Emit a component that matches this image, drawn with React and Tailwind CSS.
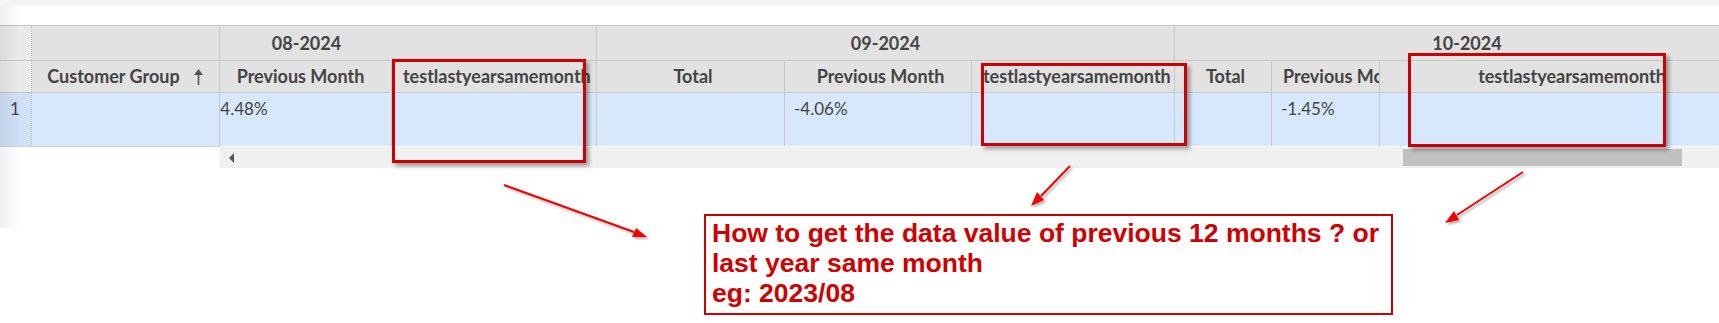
import React from "react";

const groups = [
  {
    label: "08-2024",
    cols: [
      { name: "Total", w: "w-[188px]", value: "" },
      { name: "Previous Month", w: "w-[187px]", value: "-4.48%" },
      { name: "testlastyearsamemonth", w: "w-[205px]", value: "" },
    ],
  },
  {
    label: "09-2024",
    cols: [
      { name: "Total", w: "w-[188px]", value: "" },
      { name: "Previous Month", w: "w-[187px]", value: "-4.06%" },
      { name: "testlastyearsamemonth", w: "w-[203px]", value: "" },
    ],
  },
  {
    label: "10-2024",
    cols: [
      { name: "Total", w: "w-[97px]", value: "" },
      { name: "Previous Month", w: "w-[108px]", value: "-1.45%" },
      { name: "testlastyearsamemonth", w: "w-[380px]", value: "" },
    ],
  },
];

const SortUp = () => (
  <svg width="11" height="18" viewBox="0 0 11 18" className="shrink-0">
    <path d="M5.5 1 L10 7 L1 7 Z" fill="#555" />
    <rect x="4.7" y="6" width="1.6" height="11" fill="#555" />
  </svg>
);

// red arrows drawn over the grid, screen coords
const arrows = [
  { line: "M504 185 L634 232", head: "647,237 632,237 636,228" },
  { line: "M1070 166 L1041 196", head: "1031,206 1037,192 1044,200" },
  { line: "M1523 172 L1457 215", head: "1445,223 1454,211 1459,220" },
];

function GroupColumn({ group }) {
  return (
    <div className="flex flex-col shrink-0">
      <div className="h-[35px] border-b border-r border-[#c8c8c8] flex items-center justify-center font-bold text-[18px]">
        {group.label}
      </div>
      <div className="flex h-[32px] border-b border-[#c8c8c8]">
        {group.cols.map((c, i) => (
          <div key={i} className={`${c.w} shrink-0 border-r border-[#c8c8c8] flex items-center`}>
            <div className="w-full overflow-hidden whitespace-nowrap text-center pl-[11px] pr-[6px] font-bold text-[18px]">
              {c.name}
            </div>
          </div>
        ))}
      </div>
      <div className="flex h-[53px] bg-[#d7e8fc]">
        {group.cols.map((c, i) => (
          <div key={i} className={`${c.w} shrink-0 border-r border-[#c9c9c9] pl-[9px] pt-[6px] leading-[20px] whitespace-nowrap`}>
            {c.value}
          </div>
        ))}
      </div>
    </div>
  );
}

export default function App() {
  return (
    <div className="relative w-[1719px] h-[323px] overflow-hidden bg-white font-[Lato,'Open_Sans',sans-serif] text-[17px] text-[#444]">
      <div className="h-[6px] bg-[#f4f4f4]" />
      <div className="h-[19px]" />

      {/* grid */}
      <div className="flex border-t border-[#c8c8c8] bg-[#e2e2e2]">
        {/* pinned left */}
        <div className="w-[220px] shrink-0 flex flex-col">
          <div className="flex h-[35px] border-b border-[#c8c8c8]">
            <div className="w-[32px] bg-[#eaeaea] border-r border-dotted border-[#bdbdbd]" />
            <div className="w-[188px] border-r border-[#c8c8c8]" />
          </div>
          <div className="flex h-[32px] border-b border-[#c8c8c8]">
            <div className="w-[32px] bg-[#eaeaea] border-r border-dotted border-[#bdbdbd]" />
            <div className="w-[188px] border-r border-[#c8c8c8] flex items-center justify-center gap-[13px] font-bold text-[18px] whitespace-nowrap">
              <span>Customer Group</span>
              <SortUp />
            </div>
          </div>
          <div className="flex h-[53px]">
            <div className="w-[32px] bg-[#cfe1f8] border-r border-dotted border-[#bdbdbd] pl-[10px] pt-[6px] leading-[20px]">
              1
            </div>
            <div className="w-[188px] bg-[#d7e8fc] border-r border-[#c8c8c8]" />
          </div>
        </div>

        {/* scrolled center */}
        <div className="flex-1 overflow-hidden">
          <div className="flex w-max ml-[-203px]">
            {groups.map((g) => (
              <GroupColumn key={g.label} group={g} />
            ))}
          </div>
        </div>
      </div>

      {/* horizontal scrollbar */}
      <div className="flex h-[22px]">
        <div className="w-[220px] shrink-0 border-t border-[#d0d0d0] bg-white" />
        <div className="flex-1 flex items-center border-t border-white bg-[#f0f0f0]">
          <svg width="6" height="10" viewBox="0 0 6 10" className="ml-[9px]">
            <path d="M5 0 L0 5 L5 10 Z" fill="#555" />
          </svg>
          <div className="flex-1" />
          <div className="w-[279px] h-[17px] bg-[#c1c1c1]" />
          <div className="w-[37px]" />
        </div>
      </div>

      {/* page shade on the left */}
      <div className="absolute left-0 top-[6px] w-[22px] h-[222px] bg-gradient-to-r from-black/[0.06] to-transparent pointer-events-none" />

      {/* annotation boxes */}
      <div className="absolute left-[392px] top-[59px] w-[194px] h-[104px] border-[3px] border-[#cc0000] shadow-[3px_3px_4px_rgba(0,0,0,0.35)]" />
      <div className="absolute left-[981px] top-[63px] w-[206px] h-[83px] border-[3px] border-[#cc0000] shadow-[3px_3px_4px_rgba(0,0,0,0.35)]" />
      <div className="absolute left-[1408px] top-[53px] w-[258px] h-[94px] border-[3px] border-[#cc0000] shadow-[3px_3px_4px_rgba(0,0,0,0.35)]" />

      <svg className="absolute left-0 top-0 pointer-events-none" width="1719" height="323">
        <defs>
          <filter id="sh" x="-10%" y="-10%" width="130%" height="130%">
            <feDropShadow dx="2" dy="2" stdDeviation="1.2" floodColor="#000" floodOpacity="0.3" />
          </filter>
        </defs>
        {arrows.map((a, i) => (
          <g key={i} filter="url(#sh)">
            <path d={a.line} stroke="#ee0000" strokeWidth="2" fill="none" />
            <polygon points={a.head} fill="#ee0000" />
          </g>
        ))}
      </svg>

      <div className="absolute left-[704px] top-[214px] w-[689px] h-[101px] border-2 border-[#cc0000] bg-white pl-[6px] pt-[2px] font-['Liberation_Sans',Arial,sans-serif] font-bold text-[26.5px] leading-[30px] text-[#cc0000] whitespace-nowrap">
        <div>How to get the data value of previous 12 months ? or</div>
        <div>last year same month</div>
        <div>eg: 2023/08</div>
      </div>
    </div>
  );
}
